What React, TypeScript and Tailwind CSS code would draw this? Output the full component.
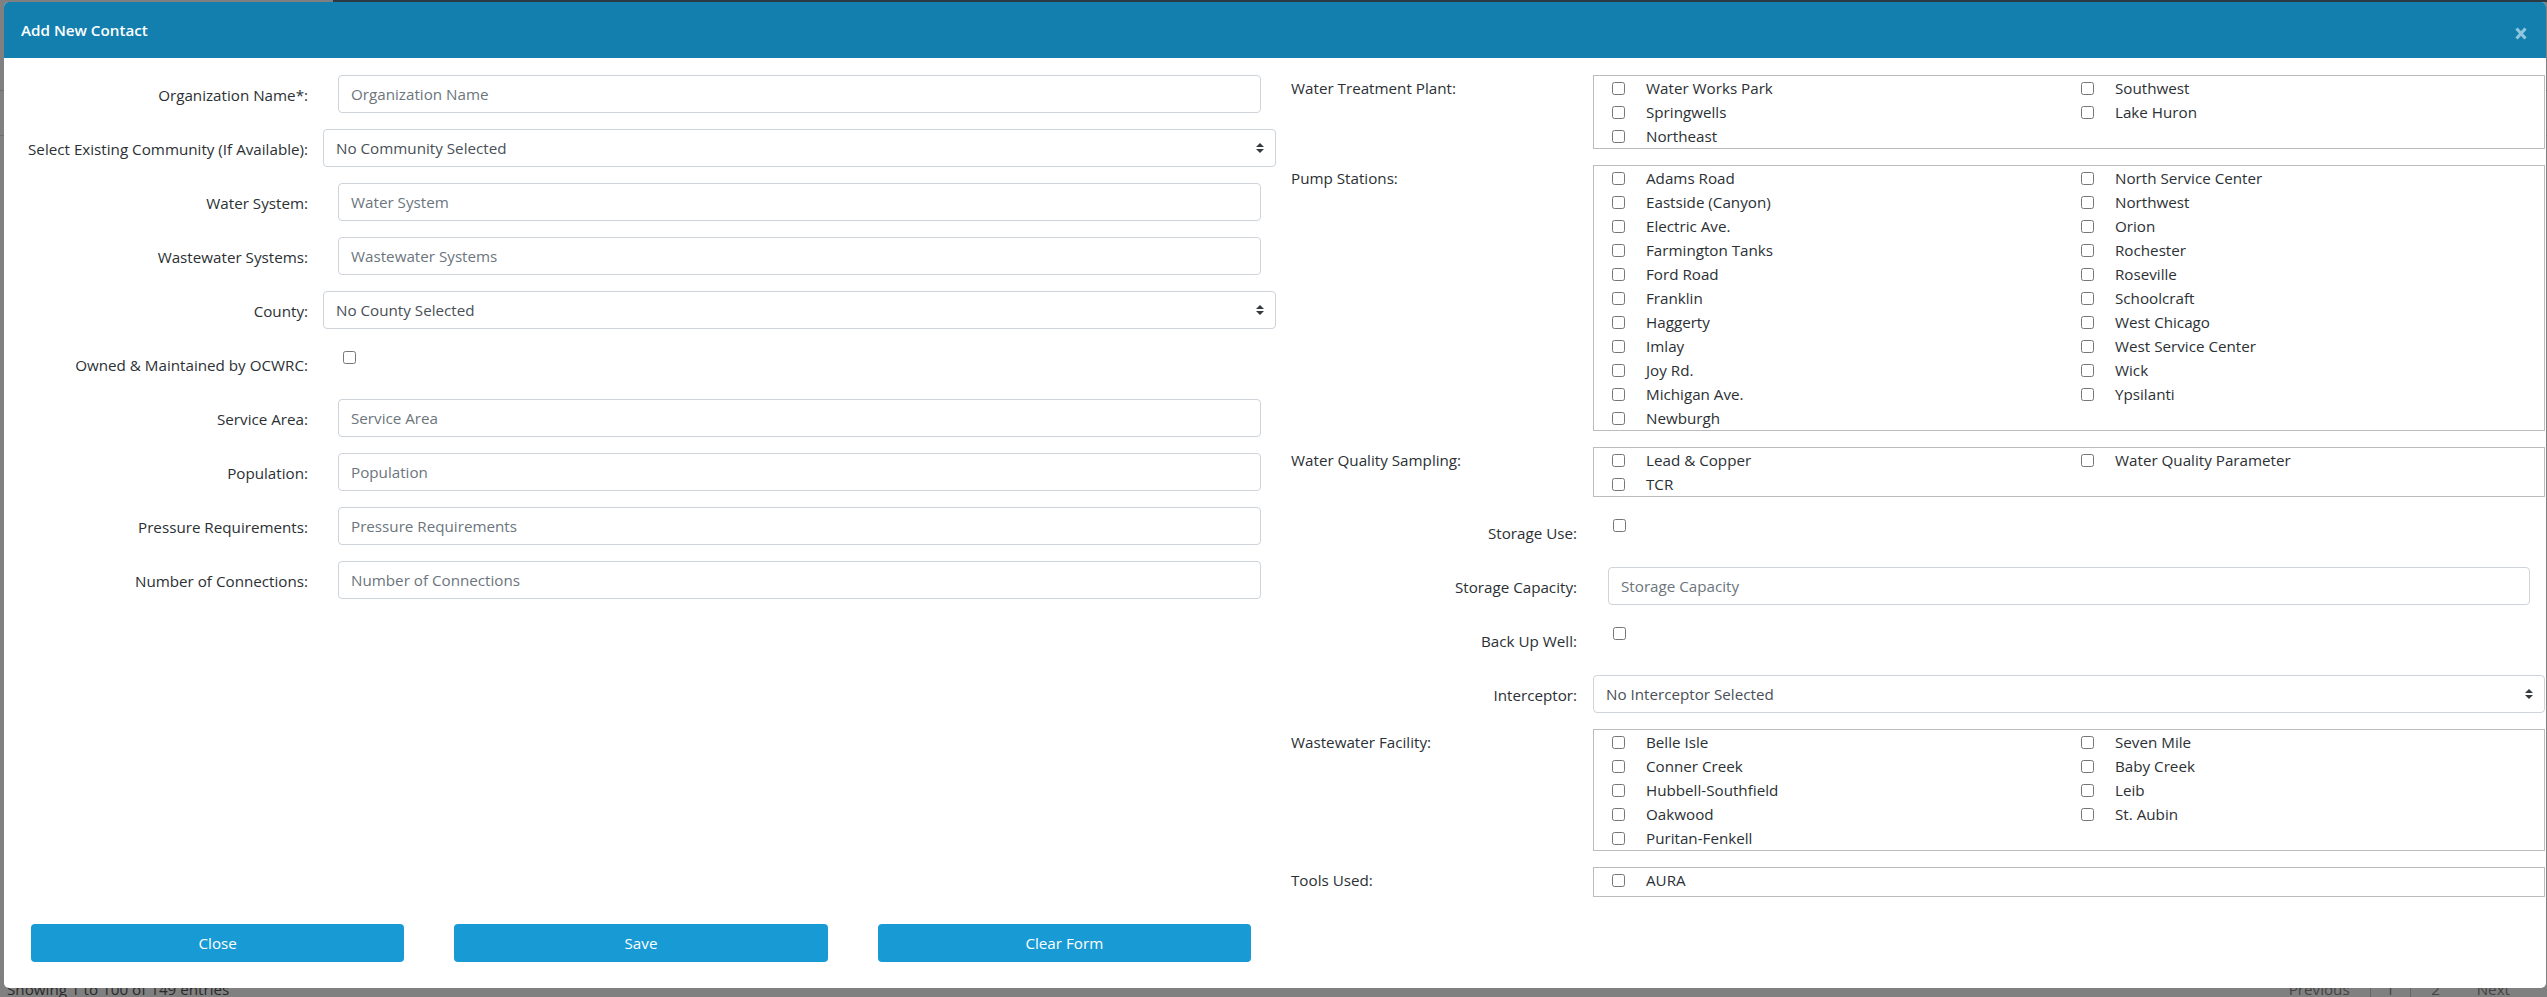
import React from "react";

const font = "font-['Open_Sans','Noto_Sans',sans-serif]";

const Arrows = () => (
  <svg viewBox="0 0 4 5" className="absolute right-[12px] top-[14px] h-[10px] w-[8px]">
    <path fill="#343a40" d="M2 0L0 2h4zm0 5L0 3h4z" />
  </svg>
);

const Label = ({ children, top }: { children: React.ReactNode; top?: boolean }) => (
  <label className={top ? "pt-[3px] text-[15.2px] leading-[21px] text-[#2b3034]" : "h-[38px] text-right text-[15.2px] leading-[40px] text-[#2b3034]"}>
    {children}
  </label>
);

const TextField = ({ placeholder }: { placeholder: string }) => (
  <input
    placeholder={placeholder}
    className="mx-[15px] block h-[38px] w-[calc(100%-30px)] rounded-[4px] border border-[#ced4da] bg-white px-[12px] text-[15.2px] text-[#495057] placeholder:text-[#6c757d]"
  />
);

const SelectField = ({ value }: { value: string }) => (
  <div className="relative">
    <select className="block h-[38px] w-full appearance-none rounded-[4px] border border-[#ced4da] bg-white px-[12px] text-[15.2px] text-[#495057]">
      <option>{value}</option>
    </select>
    <Arrows />
  </div>
);

const Check = () => (
  <div className="h-[38px] pl-[20px] pt-[6px]">
    <input type="checkbox" className="block h-[13px] w-[13px]" />
  </div>
);

const CheckList = ({ items, extra }: { items: string[]; extra?: string }) => (
  <div className={`grid grid-cols-[469px_1fr] border border-[#bcbcbc] ${extra ?? ""}`}>
    {items.map((item, i) =>
      item ? (
        <div key={i} className="flex h-[24px] items-center gap-[21px] pl-[18px] text-[15.2px] text-[#2b3034]">
          <input type="checkbox" className="h-[13px] w-[13px] shrink-0" />
          <span>{item}</span>
        </div>
      ) : (
        <div key={i} />
      ),
    )}
  </div>
);

const LeftRow = ({ label, children }: { label: string; children: React.ReactNode }) => (
  <div className="grid grid-cols-[304px_953px] gap-x-[15px]">
    <Label>{label}</Label>
    <div>{children}</div>
  </div>
);

const RightRow = ({ label, top, children }: { label: string; top?: boolean; children: React.ReactNode }) => (
  <div className="grid grid-cols-[286px_952px] gap-x-[16px]">
    <Label top={top}>{label}</Label>
    <div>{children}</div>
  </div>
);

const FooterButton = ({ children }: { children: string }) => (
  <button className="h-[38px] flex-1 rounded-[4px] bg-[#189bd5] pt-[1px] text-[15.2px] text-white">{children}</button>
);

export default function App() {
  return (
    <div className={`relative h-[997px] w-full overflow-hidden bg-[#808080] ${font}`}>
      {/* page behind the backdrop */}
      <div className="flex h-full flex-col">
        <div className="flex h-[2px]">
          <div className="w-[333px]" />
          <div className="flex-1 bg-[#2b3a45]" />
        </div>
        <div className="h-[89px] border-b border-[#6f6f6f]" />
        <div className="h-[45px] border-b border-[#6f6f6f]" />
        <div className="mt-auto -mb-[3px] flex h-[22px] items-center justify-between text-[15.2px] leading-[22px] text-[#2a2a2a]">
          <span className="pl-[7px]">Showing 1 to 100 of 149 entries</span>
          <div className="flex pr-[37px] text-[#444]">
            <span className="pr-[20px]">Previous</span>
            <span className="w-[41px] border-x border-[#666] text-center">1</span>
            <span className="w-[50px] text-center">2</span>
            <span className="pl-[16px]">Next</span>
          </div>
        </div>
      </div>

      {/* modal */}
      <div className="absolute left-[4px] top-[2px] flex h-[986px] w-[2542px] flex-col overflow-hidden rounded-[5px] bg-white">
        <div className="flex h-[56px] shrink-0 items-center justify-between bg-[#127fae] pl-[17px] pr-[19px]">
          <h5 className="text-[15.2px] font-semibold text-white">Add New Contact</h5>
          <button className="mt-[7px]">
            <svg viewBox="0 0 12 13" className="h-[13px] w-[12px]">
              <path d="M1.5 1.5l9 10M10.5 1.5l-9 10" stroke="#8fc5dd" strokeWidth="3.2" fill="none" />
            </svg>
          </button>
        </div>
        <div className="grid flex-1 grid-cols-[1271px_1271px]">
          <div className="flex flex-col gap-y-[16px] pt-[17px]">
            <LeftRow label="Organization Name*:"><TextField placeholder="Organization Name" /></LeftRow>
            <LeftRow label="Select Existing Community (If Available):"><SelectField value="No Community Selected" /></LeftRow>
            <LeftRow label="Water System:"><TextField placeholder="Water System" /></LeftRow>
            <LeftRow label="Wastewater Systems:"><TextField placeholder="Wastewater Systems" /></LeftRow>
            <LeftRow label="County:"><SelectField value="No County Selected" /></LeftRow>
            <LeftRow label="Owned & Maintained by OCWRC:"><Check /></LeftRow>
            <LeftRow label="Service Area:"><TextField placeholder="Service Area" /></LeftRow>
            <LeftRow label="Population:"><TextField placeholder="Population" /></LeftRow>
            <LeftRow label="Pressure Requirements:"><TextField placeholder="Pressure Requirements" /></LeftRow>
            <LeftRow label="Number of Connections:"><TextField placeholder="Number of Connections" /></LeftRow>
            <div className="mb-[26px] ml-[27px] mt-auto flex w-[1220px] gap-x-[50px]">
              <FooterButton>Close</FooterButton>
              <FooterButton>Save</FooterButton>
              <FooterButton>Clear Form</FooterButton>
            </div>
          </div>
          <div className="flex flex-col gap-y-[16px] pl-[16px] pt-[17px]">
            <RightRow label="Water Treatment Plant:" top>
              <CheckList items={["Water Works Park", "Southwest", "Springwells", "Lake Huron", "Northeast", ""]} />
            </RightRow>
            <RightRow label="Pump Stations:" top>
              <CheckList
                items={[
                  "Adams Road", "North Service Center",
                  "Eastside (Canyon)", "Northwest",
                  "Electric Ave.", "Orion",
                  "Farmington Tanks", "Rochester",
                  "Ford Road", "Roseville",
                  "Franklin", "Schoolcraft",
                  "Haggerty", "West Chicago",
                  "Imlay", "West Service Center",
                  "Joy Rd.", "Wick",
                  "Michigan Ave.", "Ypsilanti",
                  "Newburgh", "",
                ]}
              />
            </RightRow>
            <RightRow label="Water Quality Sampling:" top>
              <CheckList items={["Lead & Copper", "Water Quality Parameter", "TCR", ""]} />
            </RightRow>
            <RightRow label="Storage Use:"><Check /></RightRow>
            <RightRow label="Storage Capacity:"><TextField placeholder="Storage Capacity" /></RightRow>
            <RightRow label="Back Up Well:"><Check /></RightRow>
            <RightRow label="Interceptor:"><SelectField value="No Interceptor Selected" /></RightRow>
            <RightRow label="Wastewater Facility:" top>
              <CheckList
                items={[
                  "Belle Isle", "Seven Mile",
                  "Conner Creek", "Baby Creek",
                  "Hubbell-Southfield", "Leib",
                  "Oakwood", "St. Aubin",
                  "Puritan-Fenkell", "",
                ]}
              />
            </RightRow>
            <RightRow label="Tools Used:" top>
              <CheckList items={["AURA", ""]} extra="h-[30px]" />
            </RightRow>
          </div>
        </div>
      </div>
    </div>
  );
}
